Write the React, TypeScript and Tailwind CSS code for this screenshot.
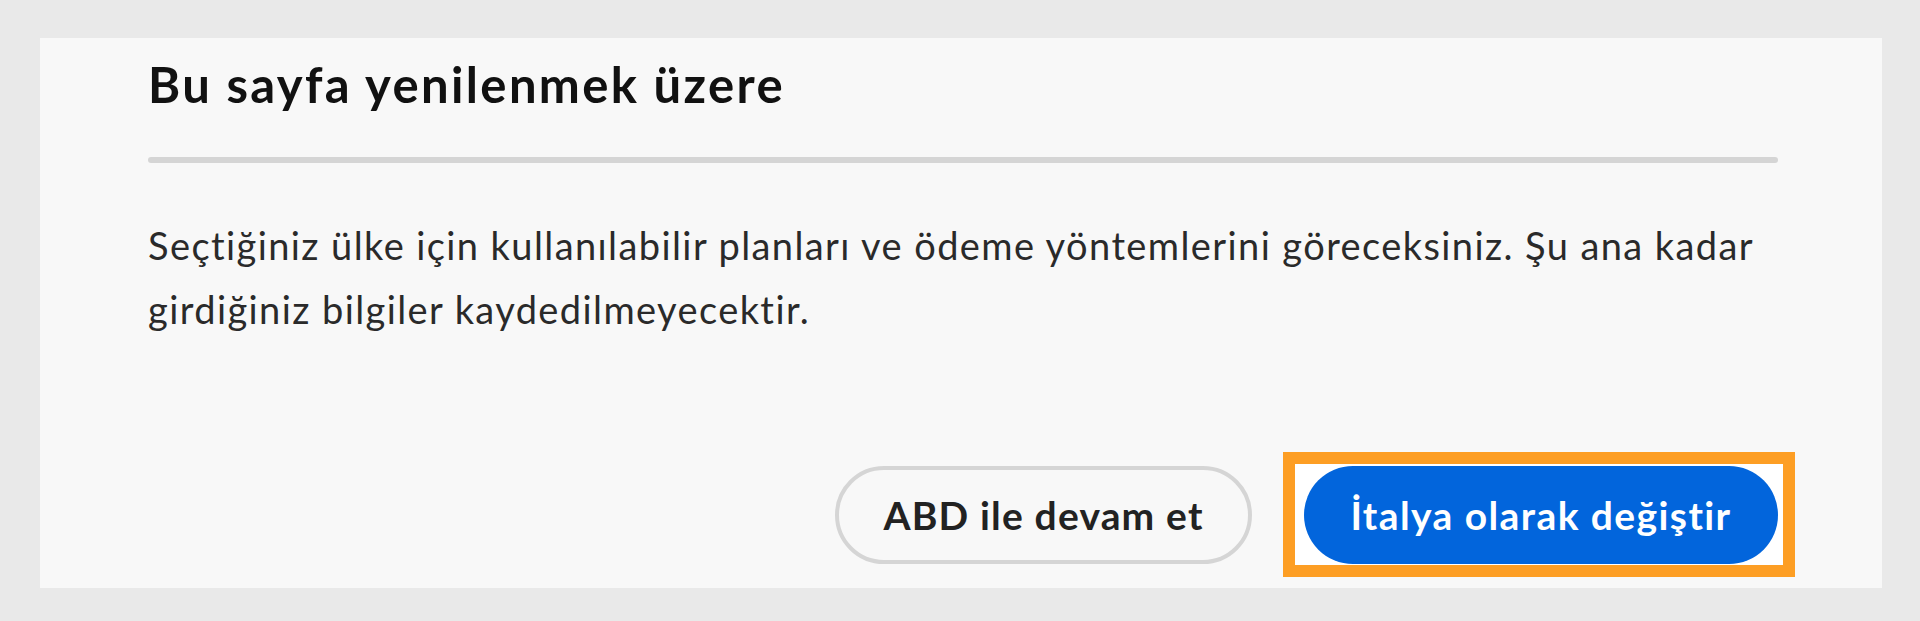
import React from 'react';

export default function App() {
  return (
    <div className="min-h-[621px] bg-[#e9e9e9] pt-[38px] pl-[40px] pr-[38px] font-['Lato',sans-serif]">
      <div className="bg-[#f8f8f8] h-[550px] pl-[108px] pr-[104px] pt-[16px]">
        <h2 className="text-[49px] leading-[60px] font-bold tracking-[0.048em] text-[#111]">Bu sayfa yenilenmek üzere</h2>
        <div className="mt-[43px] h-[6px] rounded-full bg-[#d5d5d5]" />
        <p className="mt-[50px] text-[38px] leading-[64px] tracking-[0.037em] text-[#2a2a2a]">
          Seçtiğiniz ülke için kullanılabilir planları ve ödeme yöntemlerini göreceksiniz. Şu ana kadar girdiğiniz bilgiler kaydedilmeyecektir.
        </p>
        <div className="mt-[125px] flex items-center justify-end gap-[52px]">
          <button className="h-[98px] w-[417px] rounded-full border-[4px] border-[#d5d5d5] bg-[#f8f8f8] text-[39px] font-bold tracking-[0.03em] text-[#222]">
            ABD ile devam et
          </button>
          <div className="relative">
            <span className="absolute -left-[21px] -right-[17px] -top-[14px] -bottom-[13px] border-[12px] border-[#fd9e24] bg-white" />
            <button className="relative h-[98px] w-[474px] rounded-full bg-[#0265dc] text-[39px] font-bold tracking-[0.036em] text-white">
              İtalya olarak değiştir
            </button>
          </div>
        </div>
      </div>
    </div>
  );
}
